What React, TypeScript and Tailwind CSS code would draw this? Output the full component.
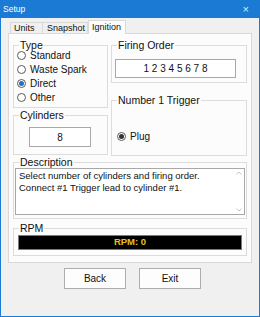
import React from 'react';

const BLUE = '#1a7ad4';

function Radio({ label, checked = false, dot = '#1f6fd1' }: { label: string; checked?: boolean; dot?: string }) {
  return (
    <div className="flex items-center gap-[4px] h-[14px]">
      <span className="w-[9px] h-[9px] rounded-full border border-[#5a5a5a] bg-white flex items-center justify-center shrink-0">
        {checked && <span className="w-[5px] h-[5px] rounded-full" style={{ background: dot }} />}
      </span>
      <span>{label}</span>
    </div>
  );
}

function Group({ title, className = '', children }: { title: string; className?: string; children?: React.ReactNode }) {
  return (
    <div className={`border border-[#dcdcdc] ${className}`}>
      <div className="-mt-[7px] ml-[5px] px-[1px] w-fit h-[12px] leading-[12px] text-[10.5px] bg-[#fcfcfc]">{title}</div>
      {children}
    </div>
  );
}

export default function App() {
  return (
    <div className="w-[260px] h-[317px] flex flex-col border-x border-b border-[#1a7ad4] bg-[#f0f0f0] font-['Liberation_Sans',Arial,sans-serif] text-[10px] text-[#111] overflow-hidden">
      {/* Title bar */}
      <div className="h-[18px] shrink-0 flex items-center justify-between pl-[2px] pr-[10px] text-white text-[8.5px]" style={{ background: BLUE }}>
        <span>Setup</span>
        <span className="text-[11px] leading-none text-[#dbe9f7]">×</span>
      </div>

      <div className="pl-[7px]">
        {/* Tabs */}
        <div className="flex items-end h-[15px] pt-[2px] pl-[2px] text-[9px]">
          <div className="w-[33px] h-[11px] border border-b-0 border-[#d9d9d9] pl-[3px] leading-[10px]">Units</div>
          <div className="w-[45px] h-[11px] border border-b-0 border-l-0 border-[#d9d9d9] pl-[4px] leading-[10px]">Snapshot</div>
          <div className="w-[38px] h-[14px] border border-b-0 border-[#d9d9d9] bg-[#fcfcfc] pl-[3px] leading-[12px] -mb-px relative z-10">Ignition</div>
        </div>

        {/* Tab page */}
        <div className="w-[244px] h-[230px] border border-[#d9d9d9] bg-[#fcfcfc] pl-[4px] pt-[11px]">
          <div className="flex gap-[3px]">
            <div className="w-[95px] flex flex-col">
              <Group title="Type" className="h-[63px]">
                <div className="-mt-[3px] pl-[3px]">
                  <Radio label="Standard" />
                  <Radio label="Waste Spark" />
                  <Radio label="Direct" checked />
                  <Radio label="Other" />
                </div>
              </Group>
              <Group title="Cylinders" className="h-[40px] mt-[7px]">
                <div className="mt-[6px] ml-[15px] w-[62px] h-[20px] border border-[#a8a8a8] bg-white flex items-center justify-center">8</div>
              </Group>
            </div>
            <div className="w-[136px] flex flex-col">
              <Group title="Firing Order" className="h-[38px]">
                <div className="mt-[8px] ml-[3px] w-[121px] h-[19px] border border-[#a8a8a8] bg-white flex items-center justify-center">1 2 3 4 5 6 7 8</div>
              </Group>
              <Group title="Number 1 Trigger" className="h-[56px] mt-[17px]">
                <div className="mt-[23px] pl-[5px]">
                  <Radio label="Plug" checked dot="#333" />
                </div>
              </Group>
            </div>
          </div>

          <Group title="Description" className="w-[234px] h-[57px] mt-[6px]">
            <div className="ml-[1px] w-[230px] h-[47px] border border-[#a8a8a8] bg-white flex">
              <div className="flex-1 pl-[3px] pt-[1px] text-[9.5px] leading-[12px]">
                Select number of cylinders and firing order.
                <br />
                Connect #1 Trigger lead to cylinder #1.
              </div>
              <div className="w-[10px] flex flex-col justify-between items-center py-[2px] text-[#c4c4c4]">
                <svg width="6" height="4" viewBox="0 0 6 4"><path d="M0.5 3.5 L3 1 L5.5 3.5" fill="none" stroke="currentColor" /></svg>
                <svg width="6" height="4" viewBox="0 0 6 4"><path d="M0.5 0.5 L3 3 L5.5 0.5" fill="none" stroke="currentColor" /></svg>
              </div>
            </div>
          </Group>

          <Group title="RPM" className="w-[234px] h-[28px] mt-[9px]">
            <div className="mt-[1px] ml-[4px] w-[224px] h-[15px] border border-[#7a7a7a] bg-black flex items-center justify-center text-[#e8c21b] font-bold text-[9.5px]">
              RPM: 0
            </div>
          </Group>
        </div>

        {/* Buttons */}
        <div className="flex gap-[13px] pl-[56px] mt-[5px]">
          <button className="w-[62px] h-[21px] border border-[#adadad] bg-[#fdfdfd]">Back</button>
          <button className="w-[62px] h-[21px] border border-[#adadad] bg-[#fdfdfd]">Exit</button>
        </div>
      </div>
    </div>
  );
}
